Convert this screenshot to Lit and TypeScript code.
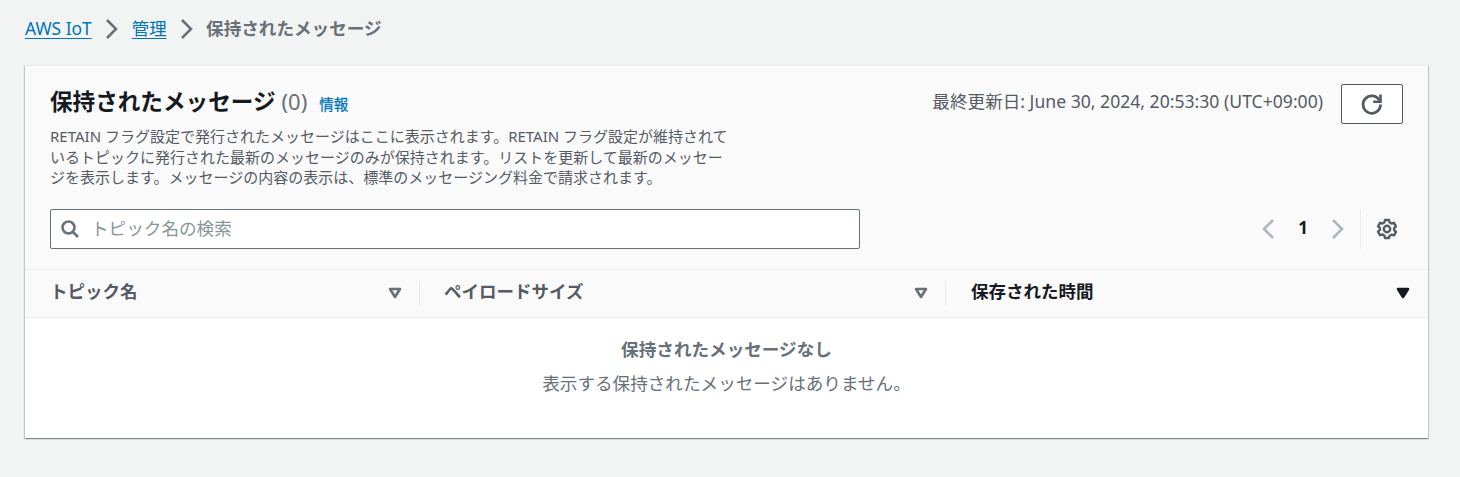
import { LitElement, html, css } from "lit";
import { customElement } from "lit/decorators.js";

@customElement("app-root")
export class AppRoot extends LitElement {
  static styles = css`
    :host { display: block; min-height: 477px; background: #f2f3f3; box-sizing: border-box; padding: 15px 32px 39px 25px;
      font-family: "Noto Sans", "Noto Sans CJK JP", sans-serif; color: #16191f; }
    * { box-sizing: border-box; }
    .crumbs { display: flex; align-items: center; height: 26px; margin-bottom: 24px; font-size: 17.4px; line-height: 22px; }
    .crumbs a { color: #0073bb; text-decoration: underline; text-underline-offset: 3px; }
    .crumbs svg { display: block; margin: 2px 13px 0; }
    .crumbs svg:last-of-type { margin-right: 12.5px; }
    .crumbs b { color: #687078; font-weight: 700; font-size: 17.6px; }
    .card { background: #fff; height: 373px; border-top: 1px solid #eaeded; box-shadow: 0 1px 1px 0 rgba(0,28,36,.3), 1px 1px 1px 0 rgba(0,28,36,.15), -1px 1px 1px 0 rgba(0,28,36,.15); }
    .head { background: #fafafa; height: 203px; padding: 18px 25px 0; display: flex; flex-direction: column; }
    .top { display: flex; justify-content: space-between; }
    .title { display: flex; align-items: baseline; height: 38px; margin-top: -2px; font-size: 22.6px; font-weight: 700; line-height: 38px; }
    .count { color: #687078; font-weight: 400; font-size: 22px; margin-left: 6px; }
    .info { color: #0073bb; font-size: 14.500px; margin-left: 12px; font-weight: 400; -webkit-text-stroke: .3px #0073bb; }
    .actions { display: flex; align-items: center; gap: 18px; font-size: 17.6px; color: #545b64; height: 40px; margin-top: -1px; }
    .stamp { margin-bottom: 5px; }
    .refresh { width: 62px; height: 40px; border: 1px solid #545b64; border-radius: 2px; background: #fff; display: flex; align-items: center; justify-content: center; padding: 0; margin-top: 1px; }
    .desc { width: 682px; margin: 3px 0 0; font-size: 15px; line-height: 20.500px; color: #545b64; }
    .tools { display: flex; justify-content: space-between; align-items: center; margin-top: 21px; }
    .search { width: 810px; height: 40px; border: 1px solid #687078; border-radius: 2px; background: #fff; display: flex; align-items: center; padding-left: 9px; gap: 11px; font-size: 17.6px; color: #879596; }
    .search span { margin-bottom: 2px; }
    .pager { display: flex; align-items: center; height: 40px; margin-right: 5px; }
    .pager .num { width: 56px; text-align: center; font-weight: 700; font-size: 17px; margin-bottom: 2px; }
    .sep { width: 1px; height: 40px; background: #eaeded; margin: 0 15px; }
    .thead { display: grid; grid-template-columns: 395px 526px 1fr; height: 49px; background: #fafafa; border-top: 1px solid #eaeded; border-bottom: 1px solid #eaeded; }
    .th { display: flex; align-items: center; justify-content: space-between; font-size: 17.5px; font-weight: 700; color: #545b64; position: relative; padding: 0 18px 2px 25px; }
    .th > span:first-child { margin-bottom: 4px; }
    .th + .th { padding-left: 24px; }
    .th.active { color: #16191f; padding-left: 25px; }
    .th .div { position: absolute; right: 0; top: 11px; height: 25px; width: 1px; background: #eaeded; }
    .empty { text-align: center; padding-top: 18px; color: #687078; font-size: 17.6px; line-height: 26px; }
    .empty b { display: block; }
    .empty p { margin: 8px 0 0; }
  `;

  private chev(c: string, d: string, w = 2.5) {
    return html`<svg width="14" height="22" viewBox="0 0 14 22" fill="none" stroke=${c} stroke-width=${w}><path d=${d}/></svg>`;
  }

  private sort(c: string, filled = false) {
    return html`<svg width="14" height="12" viewBox="0 0 14 12"><path d="M2 2h10L7 10z" fill=${filled ? c : "none"} stroke=${c} stroke-width="2.600" stroke-linejoin="round"/></svg>`;
  }

  render() {
    const right = "M2 2l9 9-9 9";
    return html`
      <nav class="crumbs">
        <a>AWS IoT</a>
        ${this.chev("#687078", right)}
        <a>管理</a>
        ${this.chev("#687078", right)}
        <b>保持されたメッセージ</b>
      </nav>
      <section class="card">
        <div class="head">
          <div class="top">
            <div class="title">保持されたメッセージ<span class="count">(0)</span><span class="info">情報</span></div>
            <div class="actions">
              <span class="stamp">最終更新日: June 30, 2024, 20:53:30 (UTC+09:00)</span>
              <button class="refresh" aria-label="更新">
                <svg width="24" height="24" viewBox="0 0 24 24" fill="none" stroke="#545b64" stroke-width="2.800"><path d="M19.500 8.500A8.700 8.700 0 1 0 20.500 12.500"/><path d="M20.500 2.500v7.300h-7.300" stroke-width="2.600"/></svg>
              </button>
            </div>
          </div>
          <p class="desc">RETAIN フラグ設定で発行されたメッセージはここに表示されます。RETAIN フラグ設定が維持されているトピックに発行された最新のメッセージのみが保持されます。リストを更新して最新のメッセージを表示します。メッセージの内容の表示は、標準のメッセージング料金で請求されます。</p>
          <div class="tools">
            <div class="search">
              <svg width="20" height="20" viewBox="0 0 20 20" fill="none" stroke="#687078" stroke-width="2.600"><circle cx="8.500" cy="8.500" r="6"/><path d="M13 13l5 5"/></svg>
              <span>トピック名の検索</span>
            </div>
            <div class="pager">
              ${this.chev("#aab7b8", "M12 2l-9 9 9 9")}
              <span class="num">1</span>
              ${this.chev("#aab7b8", right)}
              <span class="sep"></span>
              <svg width="22" height="22" viewBox="0 0 22 22" fill="none" stroke="#545b64" stroke-width="2.400"><circle cx="11" cy="11" r="3.200"/><path d="M9 2h4l.7 2.500 1.800 1 2.500-.7 2 3.500-1.900 1.800v2l1.900 1.800-2 3.500-2.500-.7-1.800 1L13 20H9l-.7-2.500-1.800-1-2.500.7-2-3.500 1.900-1.800v-2L2 8.300l2-3.500 2.500.7 1.800-1z" stroke-linejoin="round"/></svg>
            </div>
          </div>
        </div>
        <div class="thead">
          <div class="th"><span>トピック名</span>${this.sort("#687078")}<span class="div"></span></div>
          <div class="th"><span>ペイロードサイズ</span>${this.sort("#687078")}<span class="div"></span></div>
          <div class="th active"><span>保存された時間</span>${this.sort("#16191f", true)}</div>
        </div>
        <div class="empty">
          <b>保持されたメッセージなし</b>
          <p>表示する保持されたメッセージはありません。</p>
        </div>
      </section>
    `;
  }
}
